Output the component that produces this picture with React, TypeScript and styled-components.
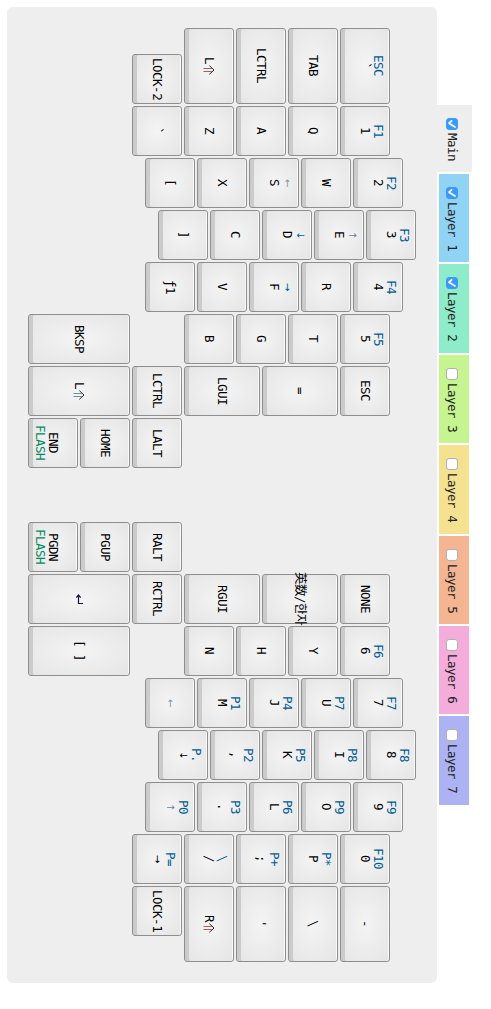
import React from "react";
import styled, { createGlobalStyle } from "styled-components";

const GlobalStyle = createGlobalStyle`
  body { margin: 0; background: #fff; }
  * { box-sizing: border-box; }
`;

const mono = `"DejaVu Sans Mono", "Noto Sans CJK JP", "Noto Sans CJK KR", monospace`;

const Page = styled.main`
  display: flex;
  align-items: flex-start;
  padding: 7px 0 0 7px;
  font: 12.5px/13px ${mono};
  letter-spacing: -0.5px;
`;

const Board = styled.section`
  display: flex;
  flex-direction: column;
  gap: 2px;
  width: 430px;
  height: 976px;
  padding: 21px;
  background: #eee;
  border-radius: 6px;
`;

const Row = styled.div<{ $indent: number; $gapBefore?: number; $end?: boolean }>`
  display: flex;
  gap: 2px;
  align-items: ${(p) => (p.$end ? "flex-end" : "flex-start")};
  margin-top: ${(p) => p.$gapBefore ?? 0}px;
  padding-left: ${(p) => p.$indent}px;
`;

const Spacer = styled.div`
  width: 50px;
`;

const Cap = styled.div<{ $w: number; $h: number }>`
  display: flex;
  flex-direction: row-reverse;
  justify-content: center;
  width: ${(p) => p.$w}px;
  height: ${(p) => p.$h}px;
  flex: none;
  border: 1px solid #8e8e8e;
  border-radius: 3px;
  background: radial-gradient(ellipse at center, #f4f4f4, #e5e5e5);
  box-shadow: inset 4px 0 0 #cbcbcb, inset -1px 0 0 #fafafa;
`;

const Legend = styled.span<{ $color: string }>`
  display: flex;
  justify-content: center;
  align-items: center;
  flex: none;
  width: 13px;
  height: 100%;
  writing-mode: vertical-rl;
  text-orientation: sideways;
  white-space: pre;
  line-height: 13px;
  color: ${(p) => p.$color};
`;

const Arrow = styled.span<{ $color?: string }>`
  font-family: "DejaVu Sans", sans-serif;
  font-size: 10px;
  line-height: 13px;
  color: ${(p) => p.$color ?? "inherit"};
`;

const Icon = styled.svg`
  flex: none;
  fill: none;
  stroke-width: 1.2;
`;

const Tabs = styled.nav`
  display: flex;
  flex-direction: column;
  gap: 2px;
  padding-top: 98px;
`;

const Tab = styled.label<{ $bg: string; $main?: boolean }>`
  display: flex;
  flex-direction: column;
  align-items: flex-start;
  gap: 3px;
  width: ${(p) => (p.$main ? 35 : 30)}px;
  height: ${(p) => (p.$main ? 67 : 88.4)}px;
  margin-left: ${(p) => (p.$main ? 0 : 2)}px;
  padding: 13px 0 0 ${(p) => (p.$main ? 9 : 7)}px;
  background: ${(p) => p.$bg};
`;

const Box = styled.span<{ $on: boolean }>`
  display: flex;
  width: 12px;
  height: 12px;
  flex: none;
  border: 1px solid ${(p) => (p.$on ? "#3b99fc" : "#b0b0b0")};
  border-radius: 3px;
  background: ${(p) => (p.$on ? "#3b99fc" : "#fff")};
`;

const TabText = styled.span`
  writing-mode: vertical-rl;
  text-orientation: sideways;
  white-space: pre;
  line-height: 13px;
  color: #222;
`;

type KeyDef = { t?: string; m?: string; b?: string; w?: number; h?: number; shift?: string } | null;
type RowDef = { indent: number; gap?: number; end?: boolean; keys: KeyDef[] };

const k = (m: string, t = "", w = 50, h = 50): KeyDef => ({ m, t, w, h });

const rows: RowDef[] = [
  { indent: 104, end: true, keys: [k("LOCK-2"), { m: "L", shift: "#b05a5a", h: 76 }, k("LCTRL", "", 50, 76), k("TAB", "", 50, 76), k("`", "ESC", 50, 76)] },
  { indent: 104, keys: [k("`"), k("Z"), k("A"), k("Q"), k("1", "F1")] },
  { indent: 117, keys: [k("["), k("X"), k("S", "←"), k("W"), k("2", "F2")] },
  { indent: 130, keys: [k("]"), k("C"), k("D", "↓"), k("E", "↑"), k("3", "F3")] },
  { indent: 117, keys: [k("ƒ1"), k("V"), k("F", "→"), k("R"), k("4", "F4")] },
  { indent: 0, keys: [k("BKSP", "", 102), null, k("B"), k("G"), k("T"), k("5", "F5")] },
  { indent: 0, keys: [{ m: "L", shift: "#5f9499", w: 102 }, k("LCTRL"), k("LGUI", "", 76), k("=", "", 76), k("ESC")] },
  { indent: 0, keys: [{ m: "END", b: "FLASH" }, k("HOME"), k("LALT")] },
  { indent: 0, gap: 52, keys: [{ m: "PGDN", b: "FLASH" }, k("PGUP"), k("RALT")] },
  { indent: 0, keys: [k("enter", "", 102), k("RCTRL"), k("RGUI", "", 76), k("英数/한자", "", 76), k("NONE")] },
  { indent: 0, keys: [k("[ ]", "", 102), null, k("N"), k("H"), k("Y"), k("6", "F6")] },
  { indent: 117, keys: [k("←"), k("M", "P1"), k("J", "P4"), k("U", "P7"), k("7", "F7")] },
  { indent: 130, keys: [k("↓", "P."), k(",", "P2"), k("K", "P5"), k("I", "P8"), k("8", "F8")] },
  { indent: 117, keys: [k("↑", "P0"), k(".", "P3"), k("L", "P6"), k("O", "P9"), k("9", "F9")] },
  { indent: 104, keys: [k("→", "P="), k("/", "\\"), k(";", "P+"), k("P", "P*"), k("0", "F10")] },
  { indent: 104, keys: [k("LOCK-1"), { m: "R", shift: "#b05a5a", h: 76 }, k("'", "", 50, 76), k("\\", "", 50, 76), k("-", "", 50, 76)] },
];

const layers = [
  { name: "Main", bg: "#eee", on: true },
  { name: "Layer 1", bg: "#91d3f5", on: true },
  { name: "Layer 2", bg: "#8eecca", on: true },
  { name: "Layer 3", bg: "#c5f491", on: false },
  { name: "Layer 4", bg: "#f5e291", on: false },
  { name: "Layer 5", bg: "#f4b692", on: false },
  { name: "Layer 6", bg: "#f4acdb", on: false },
  { name: "Layer 7", bg: "#adb2f3", on: false },
];

const arrowColors: Record<string, string> = {
  "←": "#8796a8",
  "↑": "#6f7f92",
  "↓": "inherit",
  "→": "inherit",
};

function EnterIcon() {
  return (
    <Icon width="9" height="11" viewBox="0 0 9 11" stroke="#15153a">
      <path d="M3.5 1 V9.5 H8 M1.3 3.6 L3.5 1 L5.7 3.6" />
    </Icon>
  );
}

function ShiftIcon({ color }: { color: string }) {
  return (
    <Icon width="12" height="10" viewBox="0 0 12 10" stroke={color}>
      <path d="M0.5 3.5 H8.8 M0.5 6.5 H8.8" />
      <path d="M6.3 0.6 L11 5 L6.3 9.4" stroke="#33262e" strokeWidth="1" />
    </Icon>
  );
}

function Label({ text = "" }: { text?: string }) {
  if (text === "enter") return <EnterIcon />;
  if (text in arrowColors) return <Arrow $color={arrowColors[text]}>{text}</Arrow>;
  return <span>{text}</span>;
}

function Key({ def }: { def: KeyDef }) {
  if (!def) return <Spacer />;
  return (
    <Cap $w={def.w ?? 50} $h={def.h ?? 50}>
      <Legend $color="#005c94">
        <Label text={def.t} />
      </Legend>
      <Legend $color="#000">
        <Label text={def.m} />
        {def.shift && <ShiftIcon color={def.shift} />}
      </Legend>
      <Legend $color="#008a5c">
        <Label text={def.b} />
      </Legend>
    </Cap>
  );
}

export default function App() {
  return (
    <Page>
      <GlobalStyle />
      <Board>
        {rows.map((r, i) => (
          <Row key={i} $indent={r.indent} $gapBefore={r.gap} $end={r.end}>
            {r.keys.map((d, j) => (
              <Key key={j} def={d} />
            ))}
          </Row>
        ))}
      </Board>
      <Tabs>
        {layers.map((l, i) => (
          <Tab key={l.name} $bg={l.bg} $main={i === 0}>
            <Box $on={l.on}>
              {l.on && (
                <svg width="10" height="10" viewBox="0 0 10 10">
                  <path d="M4.6 1.8 L2 4.2 L8 8" fill="none" stroke="#fff" strokeWidth="1.7" strokeLinecap="round" strokeLinejoin="round" />
                </svg>
              )}
            </Box>
            <TabText>{l.name}</TabText>
          </Tab>
        ))}
      </Tabs>
    </Page>
  );
}
